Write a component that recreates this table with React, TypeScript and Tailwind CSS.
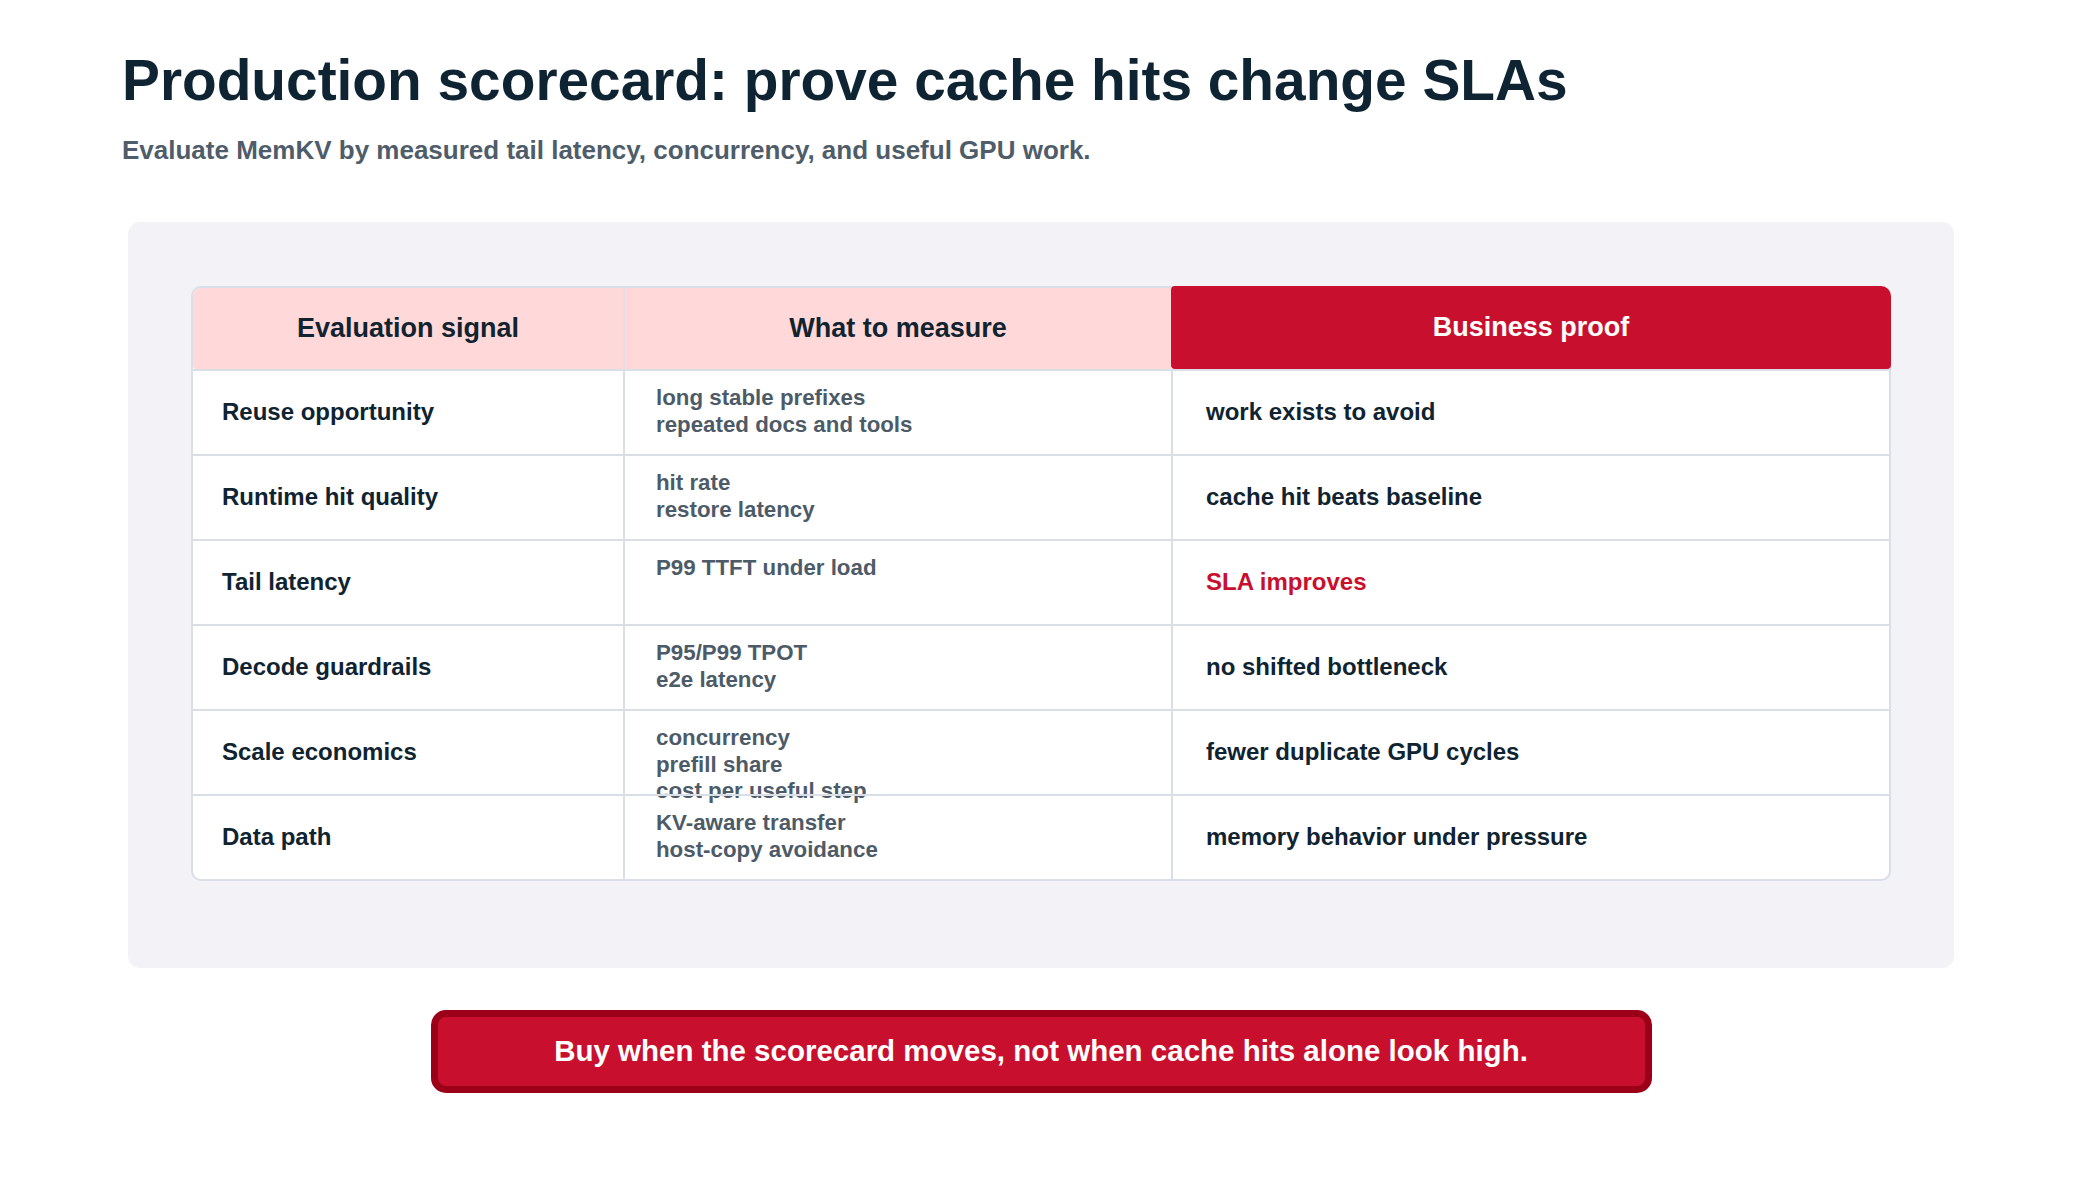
const ROWS = [
  { signal: 'Reuse opportunity', measure: ['long stable prefixes', 'repeated docs and tools'], proof: 'work exists to avoid' },
  { signal: 'Runtime hit quality', measure: ['hit rate', 'restore latency'], proof: 'cache hit beats baseline' },
  { signal: 'Tail latency', measure: ['P99 TTFT under load'], proof: 'SLA improves', accent: true },
  { signal: 'Decode guardrails', measure: ['P95/P99 TPOT', 'e2e latency'], proof: 'no shifted bottleneck' },
  { signal: 'Scale economics', measure: ['concurrency', 'prefill share', 'cost per useful step'], proof: 'fewer duplicate GPU cycles' },
  { signal: 'Data path', measure: ['KV-aware transfer', 'host-copy avoidance'], proof: 'memory behavior under pressure' },
];

/** Scorecard slide: title, comparison table and call-out banner. */
export default function App() {
  return (
    <div
      className="w-[2082px] h-[1180px] bg-white flex flex-col"
      style={{ fontFamily: '"Liberation Sans", Arial, sans-serif' }}
    >
      {/* Heading */}
      <div className="pl-[122px] pt-[53px]">
        <h1 className="text-[56.8px] leading-none font-bold text-[#0f2432]">
          Production scorecard: prove cache hits change SLAs
        </h1>
        <p className="mt-[27px] text-[26px] leading-none font-bold text-[#4f5d6a]">
          Evaluate MemKV by measured tail latency, concurrency, and useful GPU work.
        </p>
      </div>

      {/* Panel */}
      <div className="mt-[59px] mx-[128px] h-[746px] rounded-[12px] bg-[#f2f2f7] pt-[64px] px-[63px]">
        <div className="flex flex-col rounded-[10px] border-2 border-[#d9dee7] bg-white">
          {/* Header row */}
          <div className="grid grid-cols-[430px_548px_1fr] grid-rows-[81px] h-[81px]">
            <div className="flex items-center justify-center bg-[#ffd9d9] rounded-tl-[8px] rounded-bl-[3px]">
              <span className="text-[27px] font-bold text-[#10232f]">Evaluation signal</span>
            </div>
            <div className="flex items-center justify-center bg-[#ffd9d9] border-l-2 border-[#e3dfe4]">
              <span className="text-[27px] font-bold text-[#10232f]">What to measure</span>
            </div>
            <div className="flex items-center justify-center bg-[#c8102e] -mt-[2px] -mr-[2px] h-[83px] rounded-[4px] rounded-tr-[10px]">
              <span className="text-[27px] font-bold text-white">Business proof</span>
            </div>
          </div>

          {/* Body rows */}
          {ROWS.map((row) => (
            <div
              key={row.signal}
              className="grid grid-cols-[430px_548px_1fr] grid-rows-[83px] h-[85px] border-t-2 border-[#d9dee7]"
            >
              <div className="flex items-center pl-[29px]">
                <span className="text-[24px] font-bold text-[#0f2330]">{row.signal}</span>
              </div>
              <div className="border-l-2 border-[#d9dee7] pl-[31px] pt-[14px]">
                {row.measure.map((line) => (
                  <div key={line} className="text-[22.3px] leading-[1.2] font-semibold text-[#4d5b68]">
                    {line}
                  </div>
                ))}
              </div>
              <div className="flex items-center border-l-2 border-[#d9dee7] pl-[33px]">
                <span className={`text-[24px] font-bold ${row.accent ? 'text-[#c8102e]' : 'text-[#0f2330]'}`}>
                  {row.proof}
                </span>
              </div>
            </div>
          ))}
        </div>
      </div>

      {/* Call-out banner */}
      <div className="mt-[42px] mx-auto w-[1221px] h-[83px] flex items-center justify-center rounded-[15px] border-[7px] border-[#9c0019] bg-[#c8102e]">
        <span className="text-[29.5px] font-bold text-white">
          Buy when the scorecard moves, not when cache hits alone look high.
        </span>
      </div>
    </div>
  );
}
